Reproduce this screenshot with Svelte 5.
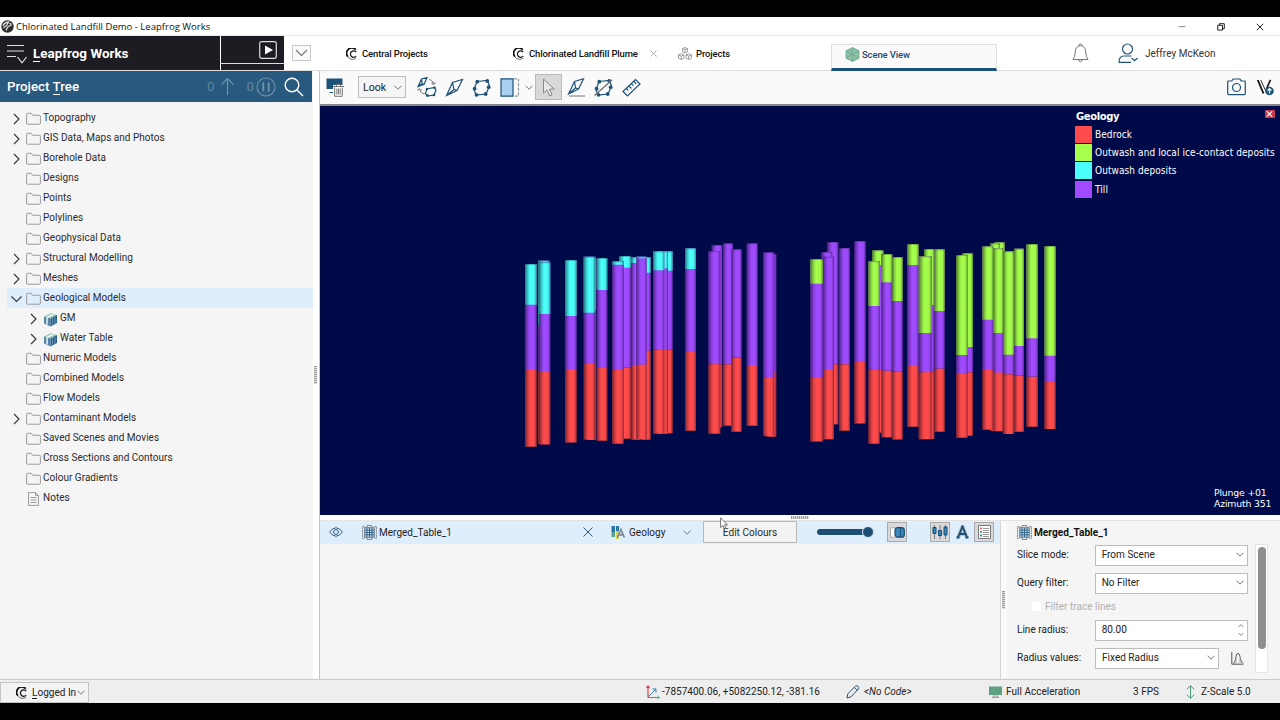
<script lang="ts">
  type Bar = [x: number, width: number, kind: string, top: number, mid: number, till: number, bottom: number]

  const colours: Record<string, string> = {
    bedrock: '#ff4b4b',
    outwashIce: '#a5ff4b',
    outwash: '#4bfffb',
    till: '#a04bff'
  }

  const legend = [
    { name: 'Bedrock', key: 'bedrock' },
    { name: 'Outwash and local ice-contact deposits', key: 'outwashIce' },
    { name: 'Outwash deposits', key: 'outwash' },
    { name: 'Till', key: 'till' }
  ]

  // boreholes, back to front
  const bars: Bar[] = [
    [525, 11.7, 'outwash', 264, 304.7, 370, 446.7],
    [538, 11.3, 'outwash', 260.7, 325, 371, 443.5],
    [539, 11.3, 'outwash', 262.3, 314, 371.3, 444.5],
    [565, 11.7, 'outwash', 260, 316, 369, 442.5],
    [585, 11, 'outwash', 257.5, 310, 361, 440],
    [583.7, 11.3, 'outwash', 256.7, 312.7, 363.3, 439.3],
    [596.7, 10.6, 'outwash', 258, 290, 368, 440.7],
    [619.3, 11.7, 'outwash', 256, 267.7, 367.7, 438.7],
    [612, 11.7, 'outwash', 261.3, 264.7, 370, 443.7],
    [631.3, 9, 'outwash', 257.3, 263, 365, 439.7],
    [641, 9.7, 'outwash', 257.3, 272.7, 350.7, 439.7],
    [636.3, 10.4, 'outwash', 256.7, 258.3, 364.7, 439.3],
    [662, 10.7, 'outwash', 251.3, 270.7, 349.7, 433.3],
    [658, 10, 'outwash', 251.3, 268.3, 349.7, 433.7],
    [653, 11.3, 'outwash', 251.3, 270.3, 349.7, 433.7],
    [685, 11, 'outwash', 248.3, 269, 352, 430.7],
    [711.7, 10.6, 'till', 245, 245, 364.3, 427.3],
    [723, 10, 'till', 243.3, 243.3, 364.3, 425.7],
    [708.3, 12, 'till', 251.3, 251.3, 364.3, 433.7],
    [731.3, 10.4, 'till', 249.3, 249.3, 357.7, 431.7],
    [746.7, 11, 'till', 243.3, 243.3, 365, 425.7],
    [765.7, 10.6, 'till', 254, 254, 371.7, 436.7],
    [763, 11.3, 'till', 252.3, 252.3, 377.3, 435.7],
    [827.3, 11, 'till', 242, 242, 364.3, 424.3],
    [821.3, 11, 'till', 252, 252, 370, 439],
    [839, 11, 'till', 248, 248, 364.3, 430.7],
    [823, 11, 'till', 256.7, 256.7, 370, 439.3],
    [810.3, 12.7, 'outwashIce', 259, 283.7, 378, 441.5],
    [854.3, 11.4, 'till', 241, 241, 362, 423.5],
    [872, 11.5, 'outwashIce', 250.3, 265, 369.3, 432.7],
    [868.3, 11.4, 'outwashIce', 261.3, 306, 369.3, 443.7],
    [881.3, 11, 'outwashIce', 254, 282.3, 370.7, 437.3],
    [892, 10.7, 'outwashIce', 257, 301, 371.3, 439.5],
    [907, 11.7, 'outwashIce', 244, 265, 366, 426.7],
    [924, 10.3, 'outwashIce', 249, 305, 371.7, 439],
    [918.7, 13, 'outwashIce', 256.3, 333, 372.3, 439.3],
    [934.3, 10.4, 'outwashIce', 249.3, 311, 368.7, 431.7],
    [962, 11, 'outwashIce', 253.3, 347, 372.3, 435.7],
    [956, 11.7, 'outwashIce', 255, 355, 374, 437.7],
    [994, 10.7, 'outwashIce', 242.3, 333, 372, 431],
    [990, 10, 'outwashIce', 243.5, 333, 372, 431],
    [982.3, 11, 'outwashIce', 246.3, 319.7, 370, 429.7],
    [993.3, 10, 'outwashIce', 248.3, 333, 372.7, 431.3],
    [1014, 10, 'outwashIce', 248.7, 346, 375.7, 431.7],
    [1003, 11, 'outwashIce', 251.3, 354.7, 374.3, 434],
    [1026.3, 11.7, 'outwashIce', 244, 338.3, 376.7, 426.7],
    [1044.3, 11.4, 'outwashIce', 246, 355.7, 382, 429]
  ]

  const tree = [
    { name: 'Topography', arrow: true },
    { name: 'GIS Data, Maps and Photos', arrow: true },
    { name: 'Borehole Data', arrow: true },
    { name: 'Designs' },
    { name: 'Points' },
    { name: 'Polylines' },
    { name: 'Geophysical Data' },
    { name: 'Structural Modelling', arrow: true },
    { name: 'Meshes', arrow: true },
    { name: 'Geological Models', open: true },
    { name: 'GM', arrow: true, model: true },
    { name: 'Water Table', arrow: true, model: true },
    { name: 'Numeric Models' },
    { name: 'Combined Models' },
    { name: 'Flow Models' },
    { name: 'Contaminant Models', arrow: true },
    { name: 'Saved Scenes and Movies' },
    { name: 'Cross Sections and Contours' },
    { name: 'Colour Gradients' },
    { name: 'Notes', note: true }
  ]

  let selected = $state('Geological Models')
</script>

{#snippet chevron()}
  <svg class="chevron" width="8" height="5" viewBox="0 0 8 5"><path d="M.5.7 4 4.2 7.5.7" /></svg>
{/snippet}

{#snippet central()}
  <svg width="12" height="12" viewBox="0 0 12 12" fill="none" stroke="#111">
    <path d="M9.8 1.7A5 5 0 0 0 1.9 8.8" stroke-width="1.7" />
    <path d="M10.2 4.2A3.2 3.2 0 1 0 10.2 8" stroke-width="1.2" />
    <path d="M1.9 8.8Q3.5 11.5 6.5 11.4q2.2 0 3.7-1.5" stroke-width=".8" stroke="#444" />
  </svg>
{/snippet}

{#snippet plane()}
  <path d="M1.5 17.5 7.5 4.5 17.5 1.5 12 12.5ZM7.5 4.5 9 11.5M1.5 17.5 9 11.5 12 12.5" />
{/snippet}

{#snippet polygon()}
  <path d="M5 3.5 15.5 2.5 17.5 8 14 16 4 17 2 11.5Z" />
  <g fill="#1d5379" stroke="none">
    <circle cx="5.3" cy="3.7" r="1.9" /><circle cx="15.3" cy="3" r="1.9" /><circle cx="16.7" cy="9.2" r="1.9" />
    <circle cx="13.7" cy="16" r="1.9" /><circle cx="4.5" cy="16.8" r="1.9" /><circle cx="2.6" cy="10.7" r="1.9" />
  </g>
{/snippet}

{#snippet table()}
  <svg width="15" height="15" viewBox="0 0 15 15" fill="none" stroke="#7a858e" stroke-width="1">
    <path d="M2.5 1.5H.6v12h1.9M12.5 1.5h1.9v12h-1.9" stroke-dasharray="2 .6" />
    <path d="M5 2.2V.6h5v1.6M5 12.8v1.6h5v-1.6" />
    <rect x="2.7" y="2.7" width="9.6" height="9.6" fill="#c5dcec" stroke="#66798a" />
    <path d="M5 3v9M7.5 3v9M10 3v9M3 5.2h9M3 7.5h9M3 9.8h9" stroke="#2b5b80" stroke-width=".9" />
  </svg>
{/snippet}

<div class="screen">
  <div class="titlebar">
    <svg width="13" height="13" viewBox="0 0 13 13">
      <circle cx="6.5" cy="6.5" r="6.2" fill="#2c2c2c" />
      <path d="M2 6.2Q3 2.5 7.5 2L5.8 5.2 2.5 8M5 10.5 6.7 7l4-2.2M8.5 3.2l2 1.2" fill="none" stroke="#ddd" stroke-width="1.3" />
    </svg>
    <span class="title">Chlorinated Landfill Demo - Leapfrog Works</span>
    <div class="win-buttons">
      <svg width="8" height="8" viewBox="0 0 8 8"><path d="M.5 3.7h7" stroke="#888" /></svg>
      <svg width="8" height="8" viewBox="0 0 8 8"><path d="M.7 2.3h4.8v4.8H.7ZM2.3 2V.7h5v5H6" /></svg>
      <svg width="8" height="8" viewBox="0 0 8 8"><path d="m.8.8 6.4 6.4M7.2.8.8 7.2" /></svg>
    </div>
  </div>

  <header>
    <div class="brand">
      <svg width="21" height="21" viewBox="0 0 21 21" fill="none" stroke="#e4e4e6" stroke-width="1.2">
        <path d="M1 1.5h17M1 7h17M1 12.5h9M11.5 13l4.5 5.8L20.5 13" />
      </svg>
      <b><u>L</u>eapfrog Works</b>
    </div>
    <div class="play">
      <div class="play-top">
        <svg width="18" height="18" viewBox="0 0 18 18">
          <rect x=".7" y=".7" width="16.6" height="16.6" rx="2" fill="none" stroke="#ddd" stroke-width="1.2" />
          <path d="M6 4.5v9l8-4.5Z" fill="#fff" />
        </svg>
      </div>
    </div>
    <div class="drop">
      <svg width="13" height="8" viewBox="0 0 13 8" fill="none" stroke="#777" stroke-width="1.2"><path d="M1 1l5.5 5.5L12 1" /></svg>
    </div>
    <nav>
      <div class="tab">{@render central()}<span>Central Projects</span></div>
      <div class="tab second">
        {@render central()}<span class="plume">Chlorinated Landfill Plume</span>
        <svg class="close" width="7" height="7" viewBox="0 0 7 7" stroke="#aaa"><path d="m.5.5 6 6M6.5.5l-6 6" /></svg>
      </div>
      <div class="tab third">
        <svg width="14" height="13" viewBox="0 0 14 13" fill="none" stroke="#888" stroke-width=".8">
          <path d="M4.5 1.6 7 .5l2.5 1.1v3.2L7 6 4.5 4.8ZM4.5 1.6 7 2.7l2.5-1.1M7 2.7V6M.5 7.9 3.2 6.7l2.7 1.2v3.3L3.2 12.5.5 11.2ZM.5 7.9l2.7 1.2 2.7-1.2M3.2 9.1v3.4M8 7.9l2.7-1.2 2.7 1.2v3.3l-2.7 1.3L8 11.2ZM8 7.9l2.7 1.2 2.7-1.2M10.7 9.1v3.4" />
        </svg>
        <span>Projects</span>
      </div>
      <div class="tab active">
        <svg width="15" height="15" viewBox="0 0 15 15" fill="#8dc0a7" stroke="#5f9f82" stroke-width=".7">
          <path d="m7.5.5 6.5 3.3v7.4L7.5 14.5 1 11.2V3.8Z" /><path d="M7.5.5v14M1 3.8l13 7.4M14 3.8 1 11.2" opacity=".7" />
        </svg>
        <span>Scene View</span>
      </div>
    </nav>
    <div class="user">
      <svg width="17" height="20" viewBox="0 0 17 20" fill="none" stroke="#777">
        <path d="M1 16.5q2-2 2.2-7.5.3-6 5.3-6.3 5 .3 5.3 6.3.2 5.5 2.2 7.5ZM7 2.8q0-2 1.5-2t1.5 2M6.5 16.7q.3 2 2 2t2-2" />
      </svg>
      <svg width="20" height="21" viewBox="0 0 20 21" fill="none" stroke="#1d5379" stroke-width="1.2">
        <circle cx="9.5" cy="6" r="5" /><path d="M13 19.3H1q0-6.3 5-6.3h7.5M13.5 15l3 2.8L19.5 15" />
      </svg>
      <span>Jeffrey McKeon</span>
    </div>
  </header>

  <main>
    <aside>
      <div class="tree-head">
        <span>Project <u>T</u>ree</span>
        <div class="tree-tools">
          <i>0</i>
          <svg width="15" height="19" viewBox="0 0 15 19"><path d="M7.5 18V1.5M1.5 7.5l6-6 6 6" /></svg>
          <i class="gap">0</i>
          <svg width="20" height="20" viewBox="0 0 20 20"><circle cx="10" cy="10" r="9" /><path d="M7.3 5.5v9M12.7 5.5v9" stroke-width="1.8" /></svg>
          <svg class="search" width="20" height="20" viewBox="0 0 20 20"><circle cx="8" cy="8" r="6.8" /><path d="m13 13 6 6" /></svg>
        </div>
      </div>
      <ul>
        {#each tree as item}
          <li class:selected={selected === item.name} class:child={item.model}>
            <button onclick={() => (selected = item.name)}>
              <svg class="arrow" width="11" height="12" viewBox="0 0 11 12">
                {#if item.arrow}<path d="m3 1 5 5-5 5" />{/if}
                {#if item.open}<path d="M.5 3.5 5.5 8.5l5-5" />{/if}
              </svg>
              {#if item.model}
                <svg class="model" width="15" height="15" viewBox="0 0 15 15">
                  <path d="M1 4.5 8 1l6 2-6.5 3.5Z" fill="#9dc7b6" />
                  <path d="M1 4.5 7.5 6.5v8L1 11.5Z" fill="#5486a8" />
                  <path d="M7.5 6.5 14 3v8l-6.5 3.5Z" fill="#28608a" />
                  <path d="m4 5.5 6.5-3.3M4 5.5v7" stroke="#f3f6f6" stroke-width="1.5" fill="none" />
                  <path d="M9.5 6v7M12 5v7" stroke="#73a4c3" stroke-width=".8" />
                </svg>
              {:else if item.note}
                <svg class="icon" width="15" height="14" viewBox="0 0 15 14"><path d="M2.5.6h7l3 3v9.8h-10ZM9.5.6v3h3M4.5 5.5h6M4.5 8h6M4.5 10.5h6" /></svg>
              {:else}
                <svg class="icon" width="15" height="14" viewBox="0 0 15 14"><path d="M.6 11.3V2.2q0-.9.9-.9h3.7l1.5 2h6.8q.9 0 .9.9v7.1q0 .9-.9.9h-12q-.9 0-.9-.9Z" /></svg>
              {/if}
              <span>{item.name}</span>
            </button>
          </li>
        {/each}
      </ul>
    </aside>
    <div class="split-v"><i class="grip"></i></div>

    <section class="work">
      <div class="toolbar">
        <svg class="clear" width="18" height="19" viewBox="0 0 18 19" fill="none">
          <path d="M.5.5h16v10.5H.5Z" fill="#1d5379" /><path d="M3.5 14.5h4M8 11v3" stroke="#1d5379" />
          <path d="M7 7h11v12H7Z" fill="#fafafa" /><path d="M8.7 9.5v8.8h7.6V9.5M7 8.5h11M10.5 8V6.5h4V8M10.8 10.5v6M12.5 10.5v6M14.2 10.5v6" stroke="#777" />
        </svg>
        <div class="look"><span>Look</span>{@render chevron()}</div>
        <svg class="t swap" width="20" height="20" viewBox="0 0 20 20">
          <path d="M1 9.5 4.5 2 10 .6 7 7.5ZM4.5 2l.6 4.5M1 9.5l4.1-3L7 7.5" />
          <path d="m10 12 7.5-1.5L19 13l-2 5-7 1-1.5-3Z" />
          <g fill="#1d5379" stroke="none"><circle cx="10" cy="12" r="1.3" /><circle cx="17.5" cy="10.8" r="1.3" /><circle cx="17" cy="18" r="1.3" /><circle cx="10.5" cy="18.5" r="1.3" /></g>
          <path d="M12 2.5q4 .5 4.5 5M14.5 5.7l2 2 2-2M8 17q-4.5-.5-5.5-5M.7 13.5l1.8-2 2.2 1.8" stroke="#888" stroke-dasharray="3 .8" />
        </svg>
        <svg class="t slicer" width="19" height="19" viewBox="0 0 19 19">{@render plane()}</svg>
        <svg class="t poly" width="19" height="19" viewBox="0 0 19 19">{@render polygon()}</svg>
        <svg class="t region" width="20" height="19" viewBox="0 0 20 19">
          <path d="M1 .8h12v17.4H1Z" fill="#a9d0ec" /><path d="M14 .8h4.5v17.4H14" stroke="#999" stroke-dasharray="3 1.5" />
        </svg>
        {@render chevron()}
        <div class="pointer">
          <svg width="14" height="19" viewBox="0 0 14 19"><path d="M1.5 1v14l3.5-3 2.5 6 2.5-1.2-2.5-5.6h4.8Z" fill="#e8e6e6" stroke="#888" /></svg>
        </div>
        <svg class="t line" width="19" height="19" viewBox="0 0 19 19"><path d="M1.5 16 7.5 3.5 16.5.8 11.5 11ZM7.5 3.5l1 6.5M1.5 16l7-6 3 1" /><path d="M2 18h16" stroke="#888" /></svg>
        <svg class="t cut" width="19" height="19" viewBox="0 0 19 19">{@render polygon()}<path d="M.5 17.5 18 2" stroke="#777" stroke-width="1.5" /></svg>
        <svg class="t ruler" width="19" height="19" viewBox="0 0 19 19"><path d="m1 13.5 12.5-12 4.5 4.5L5.5 18ZM4.5 10.5l1.8 1.8M7 8l2.5 2.5M9.5 5.8l1.8 1.8M12 3.5l2.3 2.3" /></svg>
        <svg class="t camera" width="19" height="18" viewBox="0 0 19 18"><path d="M1.5 3h3.3L6 1h7l1.2 2h3.3q.8 0 .8.8v12q0 .8-.8.8h-16q-.8 0-.8-.8v-12q0-.8.8-.8Z" /><circle cx="9.5" cy="9.5" r="4" /></svg>
        <svg class="view" width="17" height="17" viewBox="0 0 17 17" fill="none">
          <path d="M.8 1 6.5 14.5" stroke="#111" stroke-width="1.8" /><path d="M3.8 1 8 10.5" stroke="#333" /><path d="M13.5.8 8.5 12" stroke="#111" stroke-width="1.6" />
          <circle cx="12.5" cy="12" r="4.3" fill="#1d5379" /><path d="M12.5 14.5v-5M10.5 11.5l2-2 2 2" stroke="#fff" stroke-width="1.2" />
        </svg>
      </div>

      <div class="scene">
        <svg class="holes" width="960" height="409" viewBox="320 106 960 409">
          <defs>
            <linearGradient id="shade">
              <stop offset="0" stop-color="#000016" stop-opacity=".55" />
              <stop offset=".25" stop-color="#000016" stop-opacity=".18" />
              <stop offset=".45" stop-color="#000016" stop-opacity="0" />
              <stop offset=".8" stop-color="#000016" stop-opacity=".03" />
              <stop offset="1" stop-color="#000016" stop-opacity=".45" />
            </linearGradient>
          </defs>
          {#each bars as [x, width, kind, top, mid, till, bottom]}
            <rect {x} {width} y={top} height={till - top} fill={colours.till} />
            <rect {x} {width} y={top} height={mid - top} fill={colours[kind]} />
            <rect {x} {width} y={till} height={bottom - till} fill={colours.bedrock} />
            <rect {x} {width} y={top} height={bottom - top} fill="url(#shade)" />
            <rect {x} {width} y={top} height="1" fill="#000016" opacity=".25" />
          {/each}
        </svg>
        <div class="legend">
          <div class="legend-title">Geology</div>
          {#each legend as entry}
            <div class="entry"><i style="background: {colours[entry.key]}"></i><span>{entry.name}</span></div>
          {/each}
        </div>
        <div class="legend-close">
          <svg width="9" height="8" viewBox="0 0 9 8"><path d="m1.8 1.3 5.4 5.4M7.2 1.3 1.8 6.7" stroke="#fff" stroke-width="1.2" /></svg>
        </div>
        <div class="compass">Plunge +01<br />Azimuth 351</div>
      </div>
      <div class="split-h"><i></i></div>

      <div class="bottom">
        <div class="shapes">
          <div class="shape">
            <svg class="eye" width="14" height="10" viewBox="0 0 14 10"><path d="M.6 5q6.4-8.5 12.8 0-6.4 8.5-12.8 0Z" /><circle cx="7" cy="5" r="2.4" /></svg>
            {@render table()}
            <span class="shape-name">Merged_Table_1</span>
            <svg class="remove" width="10" height="10" viewBox="0 0 10 10"><path d="m.5.5 9 9M9.5.5l-9 9" /></svg>
            <svg class="geo" width="14" height="15" viewBox="0 0 14 15">
              <path d="M.5 1h3.5v6H.5ZM5 1h3v5H5Z" fill="#2877a8" /><path d="M.5 7h3.5v5H.5Z" fill="#58a28b" /><path d="M5 6h3v8H5Z" fill="#dfcf58" />
              <path d="m6.5 12.5 3.4-8 3.4 8M8 9.8h4" fill="none" stroke="#818b93" stroke-width="1.8" />
            </svg>
            <span class="geo-name">Geology</span>
            {@render chevron()}
            <button class="edit">Edit Colours</button>
            <div class="slider"><i></i></div>
            <div class="toggle cyl">
              <svg width="15" height="11" viewBox="0 0 15 11"><path d="M.5.8h7v9.4h-7Z" fill="#fff" stroke="#aaa" /><rect x="5" y=".7" width="9.3" height="9.5" rx="2.8" fill="#3c88bd" stroke="#174a70" stroke-width="1.2" /><path d="M11 1q-1.7 4.5 0 9" fill="none" stroke="#174a70" /></svg>
            </div>
            <div class="toggle holes-btn">
              <svg width="16" height="14" viewBox="0 0 16 14" stroke="#174a70"><path d="M2.5 0v14M8 0v14M13.5 0v14" stroke="#777" /><path d="M1 2.5h3v6H1ZM6.5 5.5h3v5h-3ZM12 2h3v8h-3Z" fill="#3587c0" /></svg>
            </div>
            <svg class="letter" width="13" height="14" viewBox="0 0 13 14" fill="none"><path d="M2 12.5 6.5 1.5l4.5 11M3.5 9h6" stroke="#b8c7d2" stroke-width="4" /><path d="M2 12.5 6.5 1.5l4.5 11M3.5 9h6M.5 12.5h3M9.5 12.5h3" stroke="#1d4d70" stroke-width="1.9" /></svg>
            <div class="toggle list">
              <svg width="13" height="14" viewBox="0 0 13 14"><path d="M.5.5h12v13H.5Z" fill="#fff" stroke="#777" /><path d="M5 3.5h6M5 5.5h6M5 7.5h6M5 9.5h6M5 11.5h6" stroke="#999" /><path d="M2 2.5h2v2H2Z" fill="#e46b6b" /><path d="M2 6h2v2H2Z" fill="#61a181" /><path d="M2 9.5h2v2H2Z" fill="#467fb0" /></svg>
            </div>
          </div>
        </div>
        <div class="split-v inner"><i class="grip"></i></div>
        <div class="props">
          <div class="props-title">{@render table()}<b>Merged_Table_1</b></div>
          <div class="props-body">
            <div class="form">
              <div class="field"><label for="slice">Slice mode:</label><div class="select" id="slice">From Scene{@render chevron()}</div></div>
              <div class="field"><label for="query">Query filter:</label><div class="select" id="query">No Filter{@render chevron()}</div></div>
              <div class="check"><i></i>Filter trace lines</div>
              <div class="field"><label for="radius">Line radius:</label>
                <div class="select spin" id="radius">80.00
                  <svg width="6" height="12" viewBox="0 0 6 12" fill="none" stroke="#777" stroke-width=".9"><path d="M.5 3 3 .5 5.5 3M.5 9 3 11.5 5.5 9" /></svg>
                </div>
              </div>
              <div class="field last"><label for="values">Radius values:</label><div class="select short" id="values">Fixed Radius{@render chevron()}</div>
                <svg class="curve" width="13" height="13" viewBox="0 0 13 13" fill="none" stroke="#555"><path d="M.8 0v12.2h11.5M2.5 11.5Q4.5 10 5 4.5q.5-3.2 2-3.2t2 3.2q.5 5.5 3 7" /><path d="M5 4v8M9 4v8" stroke="#aaa" /></svg>
              </div>
            </div>
            <div class="scroll"><i></i></div>
          </div>
        </div>
      </div>
    </section>
  </main>

  <footer>
    <div class="login">{@render central()}<span><u>L</u>ogged In</span>{@render chevron()}</div>
    <svg class="axes" width="14" height="14" viewBox="0 0 14 14" fill="none"><path d="M2 12 10 4M6.5 4H10v3.5" stroke="#3b78ad" /><path d="M2 12.5V1M.3 3 2 1l1.7 2" stroke="#d2484e" stroke-width="1.2" /><path d="M2 12.5h11M11.5 11l1.8 1.5-1.8 1.3" stroke="#4c9a73" /></svg>
    <span class="coords">-7857400.06, +5082250.12, -381.16</span>
    <svg class="pen" width="14" height="14" viewBox="0 0 14 14" fill="none" stroke="#1d5379"><path d="M1 13l.8-4.3L9.5 1.2q1.3-1 2.5.2 1.5 1.3.4 2.5L5 11.8ZM8.3 2.4l3.2 3" /></svg>
    <span class="code">&lt;No Code&gt;</span>
    <svg class="monitor" width="13" height="12" viewBox="0 0 13 12"><path d="M0 .5h13v8.5H0Z" fill="#5f9f82" /><path d="M5 9v2M8 9v2M3 11.3h7" stroke="#888" /></svg>
    <span class="accel">Full Acceleration</span>
    <span class="fps">3 FPS</span>
    <svg class="zscale" width="9" height="14" viewBox="0 0 9 14" fill="none" stroke="#4c9a73"><path d="M4.5 1v12M.8 4.3 4.5.7l3.7 3.6M.8 9.7l3.7 3.6 3.7-3.6" /></svg>
    <span class="z">Z-Scale 5.0</span>
  </footer>

  <svg class="cursor" width="9" height="13" viewBox="0 0 9 13"><path d="M.6.8v9.7l2.3-2 1.5 3.5 1.6-.7-1.5-3.4h3Z" fill="#fff" stroke="#555" stroke-width=".8" /></svg>
</div>

<style>
  .screen {
    position: relative;
    box-sizing: border-box;
    display: flex;
    flex-direction: column;
    width: 1280px;
    height: 720px;
    padding: 17px 0;
    overflow: hidden;
    background: #000;
    color: #222;
    font-family: Roboto, 'Liberation Sans', sans-serif;
    font-size: 10px;
    letter-spacing: 0.02px;
    white-space: nowrap;
  }

  .screen :global(svg) {
    flex: none;
    display: block;
  }

  .screen div,
  .screen i {
    box-sizing: border-box;
  }

  u {
    text-decoration: none;
    box-shadow: 0 1px 0 currentColor;
  }

  .titlebar {
    display: flex;
    align-items: center;
    height: 19px;
    padding: 1px 16px 0 1px;
    background: #fff;
    border-bottom: 1px solid #e7e7e7;
  }

  .title {
    margin-left: 2px;
    font-family: 'Open Sans', sans-serif;
    font-size: 9.5px;
    color: #111;
  }

  .win-buttons {
    display: flex;
    gap: 31px;
    margin-left: auto;
    fill: none;
    stroke: #222;
  }

  header {
    box-sizing: border-box;
    display: flex;
    height: 35px;
    background: #fff;
    border-bottom: 1px solid #dedede;
  }

  .brand {
    display: flex;
    align-items: center;
    gap: 6px;
    width: 220px;
    padding-left: 6px;
    background: #1c1c22;
    color: #fff;
    font-size: 13.4px;
  }

  .brand svg {
    margin-top: 2px;
  }

  .play {
    width: 64px;
    border-left: 1px solid #fff;
    background: #1c1c22;
  }

  .play-top {
    display: flex;
    justify-content: flex-end;
    align-items: center;
    height: 28px;
    padding-right: 7px;
    border-bottom: 1px solid #ddd;
  }

  .drop {
    display: flex;
    justify-content: center;
    align-items: center;
    width: 19px;
    height: 16px;
    margin: 9px 0 0 8px;
    border: 1px solid #c8c8c8;
    background: #fafafa;
  }

  nav {
    display: flex;
    align-items: flex-end;
    margin-left: 21px;
    height: 35px;
    font-weight: 500;
    font-size: 9.5px;
    letter-spacing: -0.14px;
    color: #111;
  }

  .tab {
    display: flex;
    align-items: center;
    width: 166px;
    height: 27px;
    padding: 0 7px 8px 14px;
  }

  .tab span {
    margin-left: 4px;
  }

  .tab.second {
    padding-left: 15px;
  }

  .tab .close {
    margin-left: auto;
  }

  .tab.active {
    margin-left: 1px;
    padding: 0 0 5px 13px;
    background: #fafafa;
    border: 1px solid #dedede;
    border-bottom: 3px solid #1b527b;
    color: #1d4d78;
  }

  .tab.active span {
    margin-left: 2px;
  }

  .user {
    display: flex;
    align-items: center;
    margin-left: 75px;
    color: #333;
  }

  .user svg + svg {
    margin-left: 29px;
  }

  .user span {
    margin-left: 7px;
  }

  main {
    display: flex;
    height: 608px;
    background: #fff;
  }

  aside {
    width: 313px;
    background: #f5f5f5;
  }

  .tree-head {
    display: flex;
    justify-content: space-between;
    align-items: center;
    width: 312px;
    height: 31px;
    padding: 0 8px 0 7px;
    background: #28597e;
    color: #fff;
    font-size: 13.3px;
    font-weight: 500;
  }

  .tree-tools {
    display: flex;
    align-items: center;
    fill: none;
    stroke: #7294ac;
    stroke-width: 1.1;
    color: #6287a1;
    font-weight: 400;
  }

  .tree-tools i {
    font-style: normal;
    margin-right: 5px;
  }

  .tree-tools i.gap {
    margin: 0 2px 0 12px;
  }

  .search {
    margin-left: 8px;
    stroke: #fff;
    stroke-width: 1.4;
  }

  ul {
    margin: 0;
    padding: 6px 0 0 7px;
    list-style: none;
  }

  li {
    height: 20px;
  }

  li.selected {
    background: #dfeefd;
  }

  li.child {
    padding-left: 17px;
  }

  li button {
    display: flex;
    align-items: center;
    width: 100%;
    height: 20px;
    padding: 0 0 0 4px;
    border: 0;
    background: none;
    font: inherit;
    letter-spacing: inherit;
    color: #2b2b2b;
    text-align: left;
  }

  li span {
    padding-bottom: 1px;
  }

  li svg {
    fill: none;
    stroke: #333;
    stroke-width: 1.1;
  }

  li .arrow {
    margin-top: 1px;
  }

  li .icon {
    margin: 2px 2px 0 4px;
    stroke: #9a9a9a;
    stroke-width: 1;
  }

  li .model {
    margin: 2px 2px 0 4px;
    stroke: none;
  }

  .split-v {
    display: flex;
    align-items: center;
    justify-content: center;
    width: 7px;
    padding-right: 1px;
    background: #fff;
    border-right: 1px solid #c4c4c4;
  }

  .grip {
    width: 3px;
    height: 18px;
    background: repeating-linear-gradient(#999 0 1px, #ddd 1px 2px);
  }

  .work {
    display: flex;
    flex-direction: column;
    width: 960px;
    background: #fafafa;
  }

  .toolbar {
    display: flex;
    align-items: center;
    height: 35px;
    padding: 0 6px 1px 6px;
    background: #fafafa;
    border-bottom: 2px solid #85858c;
  }

  .look {
    display: flex;
    align-items: center;
    justify-content: space-between;
    width: 48px;
    height: 22px;
    margin-left: 14px;
    padding: 0 3px 0 4px;
    border: 1px solid #bdbdbd;
    background: #f5f5f5;
    font-size: 10.6px;
  }

  .chevron {
    fill: none;
    stroke: #777;
  }

  .t {
    fill: none;
    stroke: #1d5379;
    stroke-width: 1.2;
  }

  .swap { margin-left: 11px; }
  .slicer { margin-left: 8px; }
  .poly { margin-left: 8px; }
  .region { margin: 0 5px 0 9px; }
  .line { margin-left: 5px; }
  .cut { margin-left: 8px; }
  .ruler { margin-left: 9px; }
  .camera { margin-left: auto; }
  .view { margin-left: 11px; }

  .pointer {
    display: flex;
    align-items: center;
    justify-content: center;
    width: 27px;
    height: 26px;
    margin-left: 2px;
    border: 1px solid #b9b9b9;
    background: #d9d7d7;
  }

  .scene {
    position: relative;
    height: 409px;
    background: #000a49;
    color: #fff;
    font-family: 'DejaVu Sans', sans-serif;
  }

  .holes {
    display: block;
  }

  .legend {
    position: absolute;
    left: 755px;
    top: 4px;
    font-size: 10px;
  }

  .legend-title {
    height: 15px;
    padding-left: 1px;
    line-height: 14px;
    font-weight: bold;
    letter-spacing: -0.4px;
  }

  .entry {
    display: flex;
    align-items: center;
    height: 18.3px;
    gap: 3px;
    font-family: 'DejaVu Sans Condensed', 'DejaVu Sans', sans-serif;
    font-stretch: condensed;
    letter-spacing: 0.08px;
  }

  .entry i {
    width: 17px;
    height: 17px;
  }

  .legend-close {
    position: absolute;
    left: 945px;
    top: 4px;
    width: 10px;
    height: 8px;
    background: #c8364a;
  }

  .compass {
    position: absolute;
    left: 894px;
    bottom: 6px;
    font-size: 9.3px;
    line-height: 11px;
    letter-spacing: -0.16px;
  }

  .split-h {
    display: flex;
    align-items: center;
    justify-content: center;
    height: 5px;
    background: #fff;
  }

  .split-h i {
    width: 18px;
    height: 3px;
    background: repeating-linear-gradient(90deg, #999 0 1px, #ddd 1px 2px);
  }

  .bottom {
    display: flex;
    height: 159px;
    border-top: 1px solid #e3e3e3;
  }

  .shapes {
    width: 681px;
    background: #f5f5f5;
    border-right: 1px solid #d5d5d5;
  }

  .shape {
    display: flex;
    align-items: center;
    height: 23px;
    padding: 0 0 1px 8px;
    background: #dfeefd;
  }

  .eye,
  .remove {
    fill: none;
    stroke: #31597a;
  }

  .eye { margin: 0 19px 0 1px; }
  .shape-name { width: 204px; margin-left: 2px; }
  .geo { margin-left: 18px; }
  .geo-name { width: 54px; margin-left: 4px; }

  .edit {
    width: 94px;
    height: 22px;
    margin-left: 12px;
    padding: 0;
    border: 1px solid #b8b8b8;
    background: #f3f3f3;
    font: inherit;
    font-size: 10.1px;
    color: #2b2b2b;
  }

  .slider {
    display: flex;
    justify-content: flex-end;
    align-items: center;
    width: 57px;
    height: 6px;
    margin-left: 20px;
    border-radius: 3px;
    background: #1b4e72;
  }

  .slider i {
    flex: none;
    width: 12px;
    height: 12px;
    border: 1px solid #dfeefd;
    border-radius: 50%;
    background: #1b4e72;
  }

  .toggle {
    display: flex;
    align-items: center;
    justify-content: center;
    width: 20px;
    height: 20px;
    border: 1px solid #aaa;
    background: #d9d9dc;
  }

  .cyl { margin-left: 13px; }
  .holes-btn { margin-left: 23px; }
  .letter { margin: 0 5px 0 6px; }

  .inner {
    width: 6px;
    background: #fafafa;
    border: 0;
  }

  .props {
    flex: 1;
    padding-left: 10px;
    background: #f5f5f5;
  }

  .props-title {
    display: flex;
    align-items: center;
    gap: 2px;
    height: 23px;
    padding-bottom: 1px;
    color: #111;
  }

  .props-title b {
    font-size: 10.1px;
  }

  .props-body {
    display: flex;
    height: 135px;
  }

  .form {
    width: 231px;
  }

  .field {
    display: flex;
    align-items: center;
    height: 22px;
    margin-bottom: 6px;
  }

  .field label {
    width: 78px;
    padding-bottom: 1px;
  }

  .select {
    display: flex;
    align-items: center;
    justify-content: space-between;
    width: 154px;
    height: 21px;
    padding: 0 3px 1px 6px;
    border: 1px solid #bdbdbd;
    background: #fff;
  }

  .select.short {
    width: 124px;
  }

  .curve {
    margin-left: 12px;
  }

  .check {
    display: flex;
    align-items: center;
    gap: 4px;
    height: 14px;
    margin-bottom: 5px;
    padding: 0 0 1px 15px;
    color: #b0b0b0;
  }

  .check i {
    width: 9px;
    height: 9px;
    background: #fff;
  }

  .scroll {
    width: 13px;
    height: 129px;
    margin-left: 7px;
    padding: 2px;
    border: 1px solid #e6e6e6;
    background: #fff;
  }

  .scroll i {
    display: block;
    width: 8px;
    height: 102px;
    border-radius: 4px;
    background: #8f8f8f;
  }

  footer {
    display: flex;
    align-items: center;
    height: 24px;
    border-top: 1px solid #c9c9c9;
    box-sizing: border-box;
    background: #eee;
  }

  .login {
    display: flex;
    align-items: center;
    align-self: flex-end;
    width: 89px;
    height: 21px;
    padding-left: 15px;
    border: 1px solid #c4c4c4;
    background: #f3f3f3;
  }

  .login span {
    width: 44px;
    margin: 0 1px 0 4px;
  }

  .axes { margin-left: 557px; }
  .coords { width: 184px; margin-left: 2px; }
  .code { width: 122px; margin-left: 4px; font-style: italic; }
  .monitor { margin-left: 3px; }
  .accel { width: 127px; margin-left: 4px; }
  .fps { width: 53px; }
  .z { margin-left: 6px; }

  .cursor {
    position: absolute;
    left: 720px;
    top: 517px;
  }
</style>
